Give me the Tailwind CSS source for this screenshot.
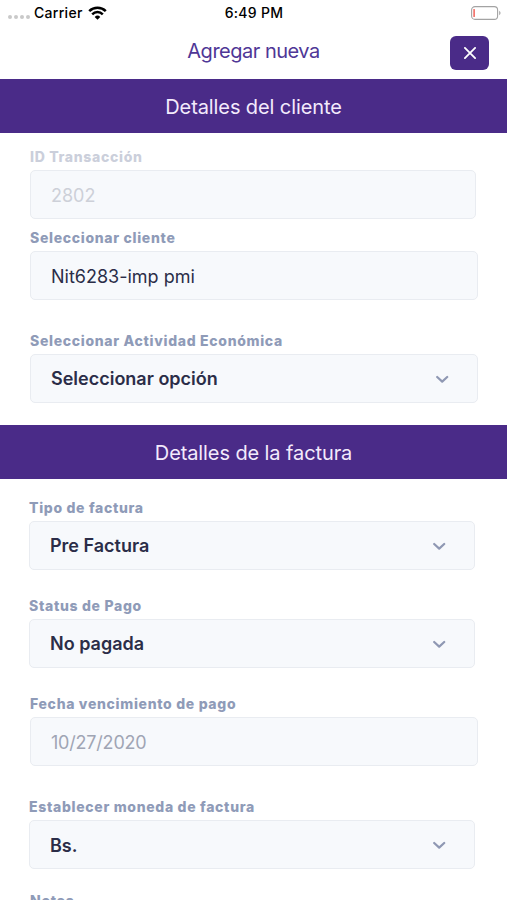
<!doctype html>
<html lang="es">
<head>
  <meta charset="UTF-8">
  <meta name="viewport" content="width=device-width, initial-scale=1.0">
  <script src="https://cdn.jsdelivr.net/npm/@tailwindcss/browser@4"></script>
  <title>Agregar nueva</title>
</head>
<body class="bg-white font-['Inter',sans-serif]">
  <div class="h-screen overflow-hidden">
    <header class="h-[79px]">
      <!-- status bar -->
      <div class="grid grid-cols-3 items-center h-[26px] pl-2 pr-[6px] text-[14px] leading-5 font-medium tracking-[0.3px] text-black">
        <div class="flex items-center">
          <div class="flex gap-[2px] w-[26px] pt-[8px]">
            <span class="size-[4px] rounded-full bg-[#c9c9c9]"></span>
            <span class="size-[4px] rounded-full bg-[#c9c9c9]"></span>
            <span class="size-[4px] rounded-full bg-[#c9c9c9]"></span>
            <span class="size-[4px] rounded-full bg-[#c9c9c9]"></span>
          </div>
          <span>Carrier</span>
          <svg class="ml-[5px] w-[19px] h-[14px]" viewBox="0 0 19 14" fill="none" stroke="#000" stroke-width="2.5">
            <path d="M1.2 5.1a11.8 11.8 0 0 1 16.6 0"/>
            <path d="M4.2 8.3a7.5 7.5 0 0 1 10.6 0"/>
            <path d="M9.5 13.8l-2.8-2.9a4 4 0 0 1 5.6 0z" fill="#000" stroke="none"/>
          </svg>
        </div>
        <span class="pr-px text-center">6:49 PM</span>
        <svg class="justify-self-end w-[30px] h-[14px]" viewBox="0 0 30 14" fill="none">
          <rect x=".6" y=".6" width="26" height="12.8" rx="3.4" stroke="#a3a3a3" stroke-width="1.1"/>
          <rect x="2.4" y="3" width="1.4" height="8" rx=".6" fill="#f0554c"/>
          <path d="M28.2 4.8c1.8.8 1.8 3.6 0 4.4z" fill="#a3a3a3"/>
        </svg>
      </div>
      <nav class="grid grid-cols-[1fr_auto_1fr] items-center h-[53px] px-[18px]">
        <h1 class="col-start-2 pb-[4px] text-[20px] leading-6 tracking-[-0.5px] text-[#4f3796]">Agregar nueva</h1>
        <button class="justify-self-end flex justify-center items-center w-[39px] h-[34px] rounded-[6px] bg-[#4a2b88]" type="button" aria-label="Cerrar">
          <svg class="size-3" viewBox="0 0 12 12" fill="none" stroke="#fff" stroke-width="1.8" stroke-linecap="round">
            <path d="M.9.9l10.2 10.2M11.1.9L.9 11.1"/>
          </svg>
        </button>
      </nav>
    </header>
    <main>
      <h2 class="flex justify-center items-center h-[54px] pt-[2px] bg-[#4a2b88] text-[20px] tracking-[-0.1px] text-[#f3eafc]">Detalles del cliente</h2>
      <form class="flex flex-col h-[292px] pt-4 pl-[30px] pr-[29px] text-[18px] text-[#2b2d48]">
        <div class="mb-[11px] mr-[2px]">
          <label class="block h-[21px] text-[14px] leading-4 font-extrabold tracking-[0.68px] text-[#cbcfdb]">ID Transacción</label>
          <div class="flex items-center h-[49px] px-5 pt-px rounded-[5px] border border-[#e9ecf1] bg-[#f7f9fc] text-[#cdd0d8]">2802</div>
        </div>
        <div class="mb-[33px]">
          <label class="block h-[21px] text-[14px] leading-4 font-extrabold tracking-[0.68px] text-[#8f9bb8]">Seleccionar cliente</label>
          <div class="flex items-center h-[49px] px-5 pt-px rounded-[5px] border border-[#e9ecf1] bg-[#f7f9fc]">Nit6283-imp pmi</div>
        </div>
        <div>
          <label class="block h-[21px] text-[14px] leading-4 font-extrabold tracking-[0.68px] text-[#8f9bb8]">Seleccionar Actividad Económica</label>
          <div class="flex items-center justify-between h-[49px] pl-5 pr-7 rounded-[5px] border border-[#e9ecf1] bg-[#f7f9fc] font-semibold">
            <span>Seleccionar opción</span>
            <svg class="w-[13px] h-2" viewBox="0 0 13 8" fill="none" stroke="#8f98b3" stroke-width="2.2" stroke-linecap="round" stroke-linejoin="round"><path d="M1.2 2l5 4.6 5-4.6"/></svg>
          </div>
        </div>
      </form>
      <h2 class="flex justify-center items-center h-[54px] pt-[2px] bg-[#4a2b88] text-[20px] tracking-[-0.1px] text-[#f3eafc]">Detalles de la factura</h2>
      <form class="flex flex-col pt-[21px] pl-[29px] pr-8 text-[18px] font-semibold text-[#2b2d48]">
        <div class="mb-7">
          <label class="block h-[21px] text-[14px] leading-4 font-extrabold tracking-[0.68px] text-[#8f9bb8]">Tipo de factura</label>
          <div class="flex items-center justify-between h-[49px] pl-5 pr-7 rounded-[5px] border border-[#e9ecf1] bg-[#f7f9fc]">
            <span>Pre Factura</span>
            <svg class="w-[13px] h-2" viewBox="0 0 13 8" fill="none" stroke="#8f98b3" stroke-width="2.2" stroke-linecap="round" stroke-linejoin="round"><path d="M1.2 2l5 4.6 5-4.6"/></svg>
          </div>
        </div>
        <div class="mb-7">
          <label class="block h-[21px] text-[14px] leading-4 font-extrabold tracking-[0.68px] text-[#8f9bb8]">Status de Pago</label>
          <div class="flex items-center justify-between h-[49px] pl-5 pr-7 rounded-[5px] border border-[#e9ecf1] bg-[#f7f9fc]">
            <span>No pagada</span>
            <svg class="w-[13px] h-2" viewBox="0 0 13 8" fill="none" stroke="#8f98b3" stroke-width="2.2" stroke-linecap="round" stroke-linejoin="round"><path d="M1.2 2l5 4.6 5-4.6"/></svg>
          </div>
        </div>
        <div class="mb-[33px] ml-px -mr-[3px]">
          <label class="block h-[21px] text-[14px] leading-4 font-extrabold tracking-[0.68px] text-[#8f9bb8]">Fecha vencimiento de pago</label>
          <div class="flex items-center h-[49px] px-5 pt-px rounded-[5px] border border-[#e9ecf1] bg-[#f7f9fc] font-normal tracking-[-0.2px] text-[#a0a5b4]">10/27/2020</div>
        </div>
        <div class="mb-[23px]">
          <label class="block h-[21px] text-[14px] leading-4 font-extrabold tracking-[0.68px] text-[#8f9bb8]">Establecer moneda de factura</label>
          <div class="flex items-center justify-between h-[49px] pl-5 pr-7 pt-px rounded-[5px] border border-[#e9ecf1] bg-[#f7f9fc]">
            <span>Bs.</span>
            <svg class="w-[13px] h-2" viewBox="0 0 13 8" fill="none" stroke="#8f98b3" stroke-width="2.2" stroke-linecap="round" stroke-linejoin="round"><path d="M1.2 2l5 4.6 5-4.6"/></svg>
          </div>
        </div>
        <label class="block ml-px pt-px text-[14px] leading-4 font-extrabold tracking-[0.68px] text-[#8f9bb8]">Notas</label>
      </form>
    </main>
  </div>
</body>
</html>
